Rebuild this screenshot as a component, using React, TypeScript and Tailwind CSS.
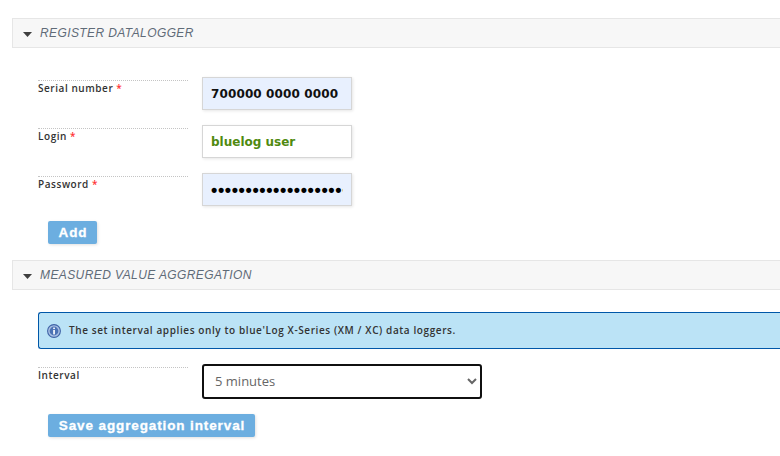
const labelFont = { fontFamily: '"Open Sans", sans-serif' };
const inputFont = { fontFamily: '"DejaVu Sans", sans-serif' };

function SectionHeader({ title }: { title: string }) {
  return (
    <div className="ml-3 flex h-[30px] items-center border border-r-0 border-[#e6e6e6] bg-[#f7f7f7] pb-[1px] pl-[10px]">
      <svg width="9" height="5" viewBox="0 0 9 5" className="mt-[3px]">
        <path d="M0 0h9L4.5 5z" fill="#3f3f3f" />
      </svg>
      <span className="ml-2 font-['Liberation_Sans',sans-serif] text-xs italic tracking-[0.4px] text-[#5f6b78]">
        {title}
      </span>
    </div>
  );
}

function FieldLabel({ text, required }: { text: string; required?: boolean }) {
  return (
    <div
      className="h-full w-[150px] shrink-0 border-t border-dotted border-[#c4c4c4] text-[10px] leading-[14px] font-semibold tracking-[0.55px] text-[#333]"
      style={labelFont}
    >
      {text}
      {required && <span className="ml-[3px] text-[#f33]">*</span>}
    </div>
  );
}

function TextField({
  value,
  type = "text",
  autofilled,
  className,
}: {
  value: string;
  type?: string;
  autofilled?: boolean;
  className?: string;
}) {
  return (
    <input
      readOnly
      type={type}
      value={value}
      className={`ml-[14px] -mt-[3px] h-[33px] w-[150px] border border-[#d6d6d6] pr-2 pl-2 font-bold shadow-[1px_1px_3px_rgba(0,0,0,0.1)] outline-none ${
        autofilled ? "bg-[#e8f0fe]" : "bg-white"
      } ${className ?? ""}`}
      style={type === "password" ? { fontFamily: '"Liberation Sans", sans-serif' } : inputFont}
    />
  );
}

function ActionButton({ label, className }: { label: string; className: string }) {
  return (
    <button
      className={`rounded-[2px] bg-[#6caee0] pt-[1px] pl-[1px] font-['Liberation_Sans',sans-serif] text-[13.5px] font-bold tracking-[0.88px] text-white shadow-[1px_1px_3px_rgba(0,0,0,0.12)] [-webkit-text-stroke:0.3px_white] ${className}`}
    >
      {label}
    </button>
  );
}

export default function App() {
  return (
    <div className="h-[456px] w-[780px] overflow-hidden bg-white pt-[18px]">
      <SectionHeader title="REGISTER DATALOGGER" />

      <div className="mt-[29px] ml-[38px] flex flex-col gap-[15px]">
        <div className="flex h-[33px] items-start pt-[3px]">
          <FieldLabel text="Serial number" required />
          <TextField
            value="700000 0000 0000"
            autofilled
            className="text-xs tracking-[0.12px] text-[#111]"
          />
        </div>
        <div className="flex h-[33px] items-start pt-[3px]">
          <FieldLabel text="Login" required />
          <TextField value="bluelog user" className="text-xs text-[#4f8a10]" />
        </div>
        <div className="flex h-[33px] items-start pt-[3px]">
          <FieldLabel text="Password" required />
          <TextField
            type="password"
            value="bluelogpassword123456"
            autofilled
            className="pt-[1px] text-[18px] tracking-[0.6px] text-black"
          />
        </div>
      </div>

      <ActionButton label="Add" className="mt-[15px] ml-[48px] block h-[23px] w-[49px]" />

      <div className="mt-[16px]">
        <SectionHeader title="MEASURED VALUE AGGREGATION" />
      </div>

      <div
        className="mt-[22px] ml-[38px] flex h-[37px] items-center rounded-l-[3px] border border-r-0 border-[#0057a8] bg-[#bbe3f6] pl-[8px] text-[10px] font-semibold tracking-[0.6px] text-[#333]"
        style={labelFont}
      >
        <svg width="14" height="14" viewBox="0 0 14 14" className="shrink-0">
          <circle cx="7" cy="7" r="6.4" fill="#a9c0e4" stroke="#3f63a6" strokeWidth="1.1" />
          <circle cx="7" cy="7" r="4.4" fill="#4c72b4" />
          <rect x="6.2" y="6" width="1.7" height="4.4" fill="#fff" />
          <rect x="6.2" y="3.6" width="1.7" height="1.5" fill="#fff" />
        </svg>
        <span className="ml-[8px]">
          The set interval applies only to blue'Log X-Series (XM / XC) data loggers.
        </span>
      </div>

      <div className="mt-[18px] ml-[38px] flex h-[35px] items-start">
        <FieldLabel text="Interval" />
        <select
          defaultValue="5"
          className="ml-[14px] -mt-[3px] h-[35px] w-[280px] rounded-[3px] border-2 border-[#101010] pb-[1px] pl-[7px] text-[13px] text-[#666] outline-none"
          style={labelFont}
        >
          <option value="5">5 minutes</option>
          <option value="15">15 minutes</option>
          <option value="60">60 minutes</option>
        </select>
      </div>

      <ActionButton
        label="Save aggregation interval"
        className="mt-[12px] ml-[48px] block h-[23px] w-[207px]"
      />
    </div>
  );
}
